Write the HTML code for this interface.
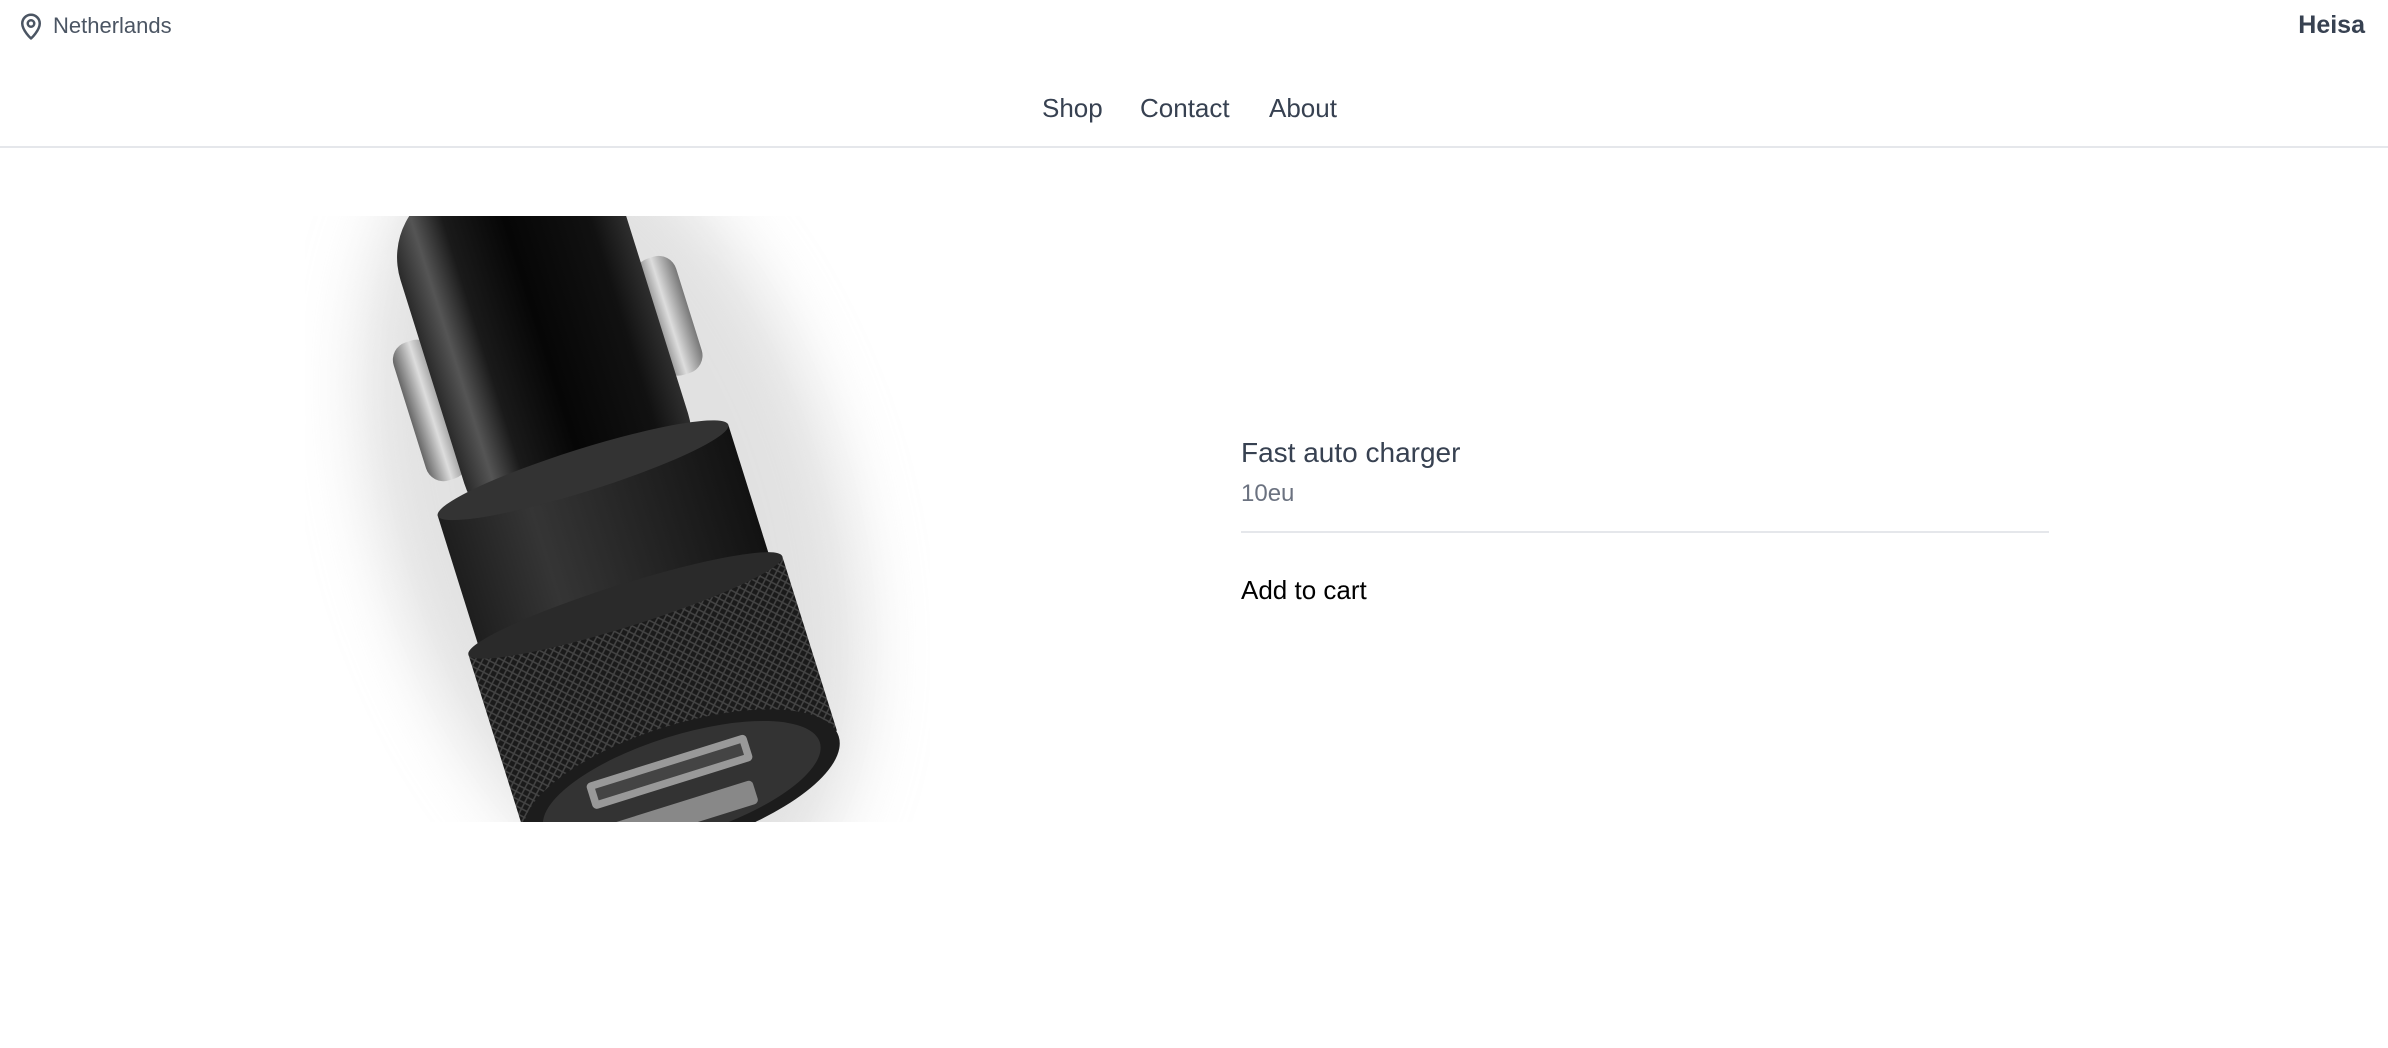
<!DOCTYPE html>
<html><head><meta charset="utf-8">
<style>
*{margin:0;padding:0;box-sizing:border-box}
html,body{width:2388px;height:1048px;background:#fff;overflow:hidden;font-family:"Liberation Sans",Arial,sans-serif}
.abs{position:absolute;white-space:nowrap}
</style></head><body>
<svg class="abs" style="left:16px;top:10px" width="30" height="32" viewBox="0 0 24 24" fill="none" stroke="#4b5563" stroke-width="2" stroke-linecap="round" stroke-linejoin="round"><path d="M12 22s-7-6.5-7-12a7 7 0 0 1 14 0c0 5.5-7 12-7 12z"/><circle cx="12" cy="10" r="2.6"/></svg>
<div class="abs" style="left:53px;top:12px;font-size:22px;color:#4b5563;line-height:28px">Netherlands</div>
<div class="abs" style="right:23px;top:10px;font-size:25px;font-weight:bold;color:#374151;line-height:30px">Heisa</div>
<div class="abs" style="left:1042px;top:92px;font-size:26px;color:#374151;line-height:32px">Shop</div>
<div class="abs" style="left:1140px;top:92px;font-size:26px;color:#374151;line-height:32px">Contact</div>
<div class="abs" style="left:1269px;top:92px;font-size:26px;color:#374151;line-height:32px">About</div>
<div class="abs" style="left:0;top:146px;width:2388px;height:2px;background:#e5e7eb"></div>

<svg class="abs" style="left:305px;top:216px" width="625" height="606" viewBox="200 142 410 398">
<defs>
<clipPath id="c"><rect x="200" y="142" width="410" height="398"/></clipPath>
<filter id="b" x="-50%" y="-50%" width="200%" height="200%"><feGaussianBlur stdDeviation="22"/></filter>
<linearGradient id="g1" x1="0" x2="1"><stop offset="0" stop-color="#2a2a2a"/><stop offset=".12" stop-color="#555"/><stop offset=".25" stop-color="#1a1a1a"/><stop offset=".5" stop-color="#060606"/><stop offset=".85" stop-color="#111"/><stop offset="1" stop-color="#2e2e2e"/></linearGradient>
<linearGradient id="g2" x1="0" x2="1"><stop offset="0" stop-color="#1e1e1e"/><stop offset=".3" stop-color="#353535"/><stop offset=".6" stop-color="#262626"/><stop offset="1" stop-color="#121212"/></linearGradient>
<linearGradient id="gm" x1="0" x2="1"><stop offset="0" stop-color="#666"/><stop offset=".5" stop-color="#ddd"/><stop offset="1" stop-color="#777"/></linearGradient>
<pattern id="k" width="6" height="6" patternUnits="userSpaceOnUse"><rect width="6" height="6" fill="#1a1a1a"/><path d="M0 0L6 6M6 0L0 6" stroke="#444" stroke-width="1"/></pattern>
</defs>
<g clip-path="url(#c)">
<g transform="translate(330,142) rotate(-17.4)">
<ellipse cx="10" cy="210" rx="150" ry="270" fill="#c4c4c4" opacity=".5" filter="url(#b)"/>
<rect x="-98" y="60" width="28" height="95" rx="12" fill="url(#gm)"/>
<rect x="70" y="55" width="28" height="80" rx="12" fill="url(#gm)"/>
<rect x="-77" y="-30" width="154" height="240" rx="50" fill="url(#g1)"/>
<rect x="-100" y="175" width="200" height="110" fill="url(#g2)"/>
<ellipse cx="0" cy="175" rx="100" ry="14" fill="#333"/>
<rect x="-108" y="268" width="216" height="120" fill="url(#k)"/>
<ellipse cx="0" cy="268" rx="108" ry="14" fill="#2a2a2a"/>
<ellipse cx="0" cy="392" rx="108" ry="40" fill="#1c1c1c"/>
<ellipse cx="0" cy="392" rx="95" ry="33" fill="#333"/>
<rect x="-60" y="372" width="110" height="18" rx="3" fill="#999"/>
<rect x="-55" y="377" width="100" height="8" fill="#444"/>
<rect x="-55" y="402" width="100" height="16" rx="3" fill="#888"/>
</g></g>
</svg>

<div class="abs" style="left:1241px;top:436px;font-size:28px;color:#374151;line-height:34px">Fast auto charger</div>
<div class="abs" style="left:1241px;top:479px;font-size:24px;color:#6b7280;line-height:30px">10eu</div>
<div class="abs" style="left:1241px;top:531px;width:808px;height:2px;background:#e5e7eb"></div>
<div class="abs" style="left:1241px;top:574px;font-size:26px;color:#000;line-height:32px">Add to cart</div>
</body></html>
